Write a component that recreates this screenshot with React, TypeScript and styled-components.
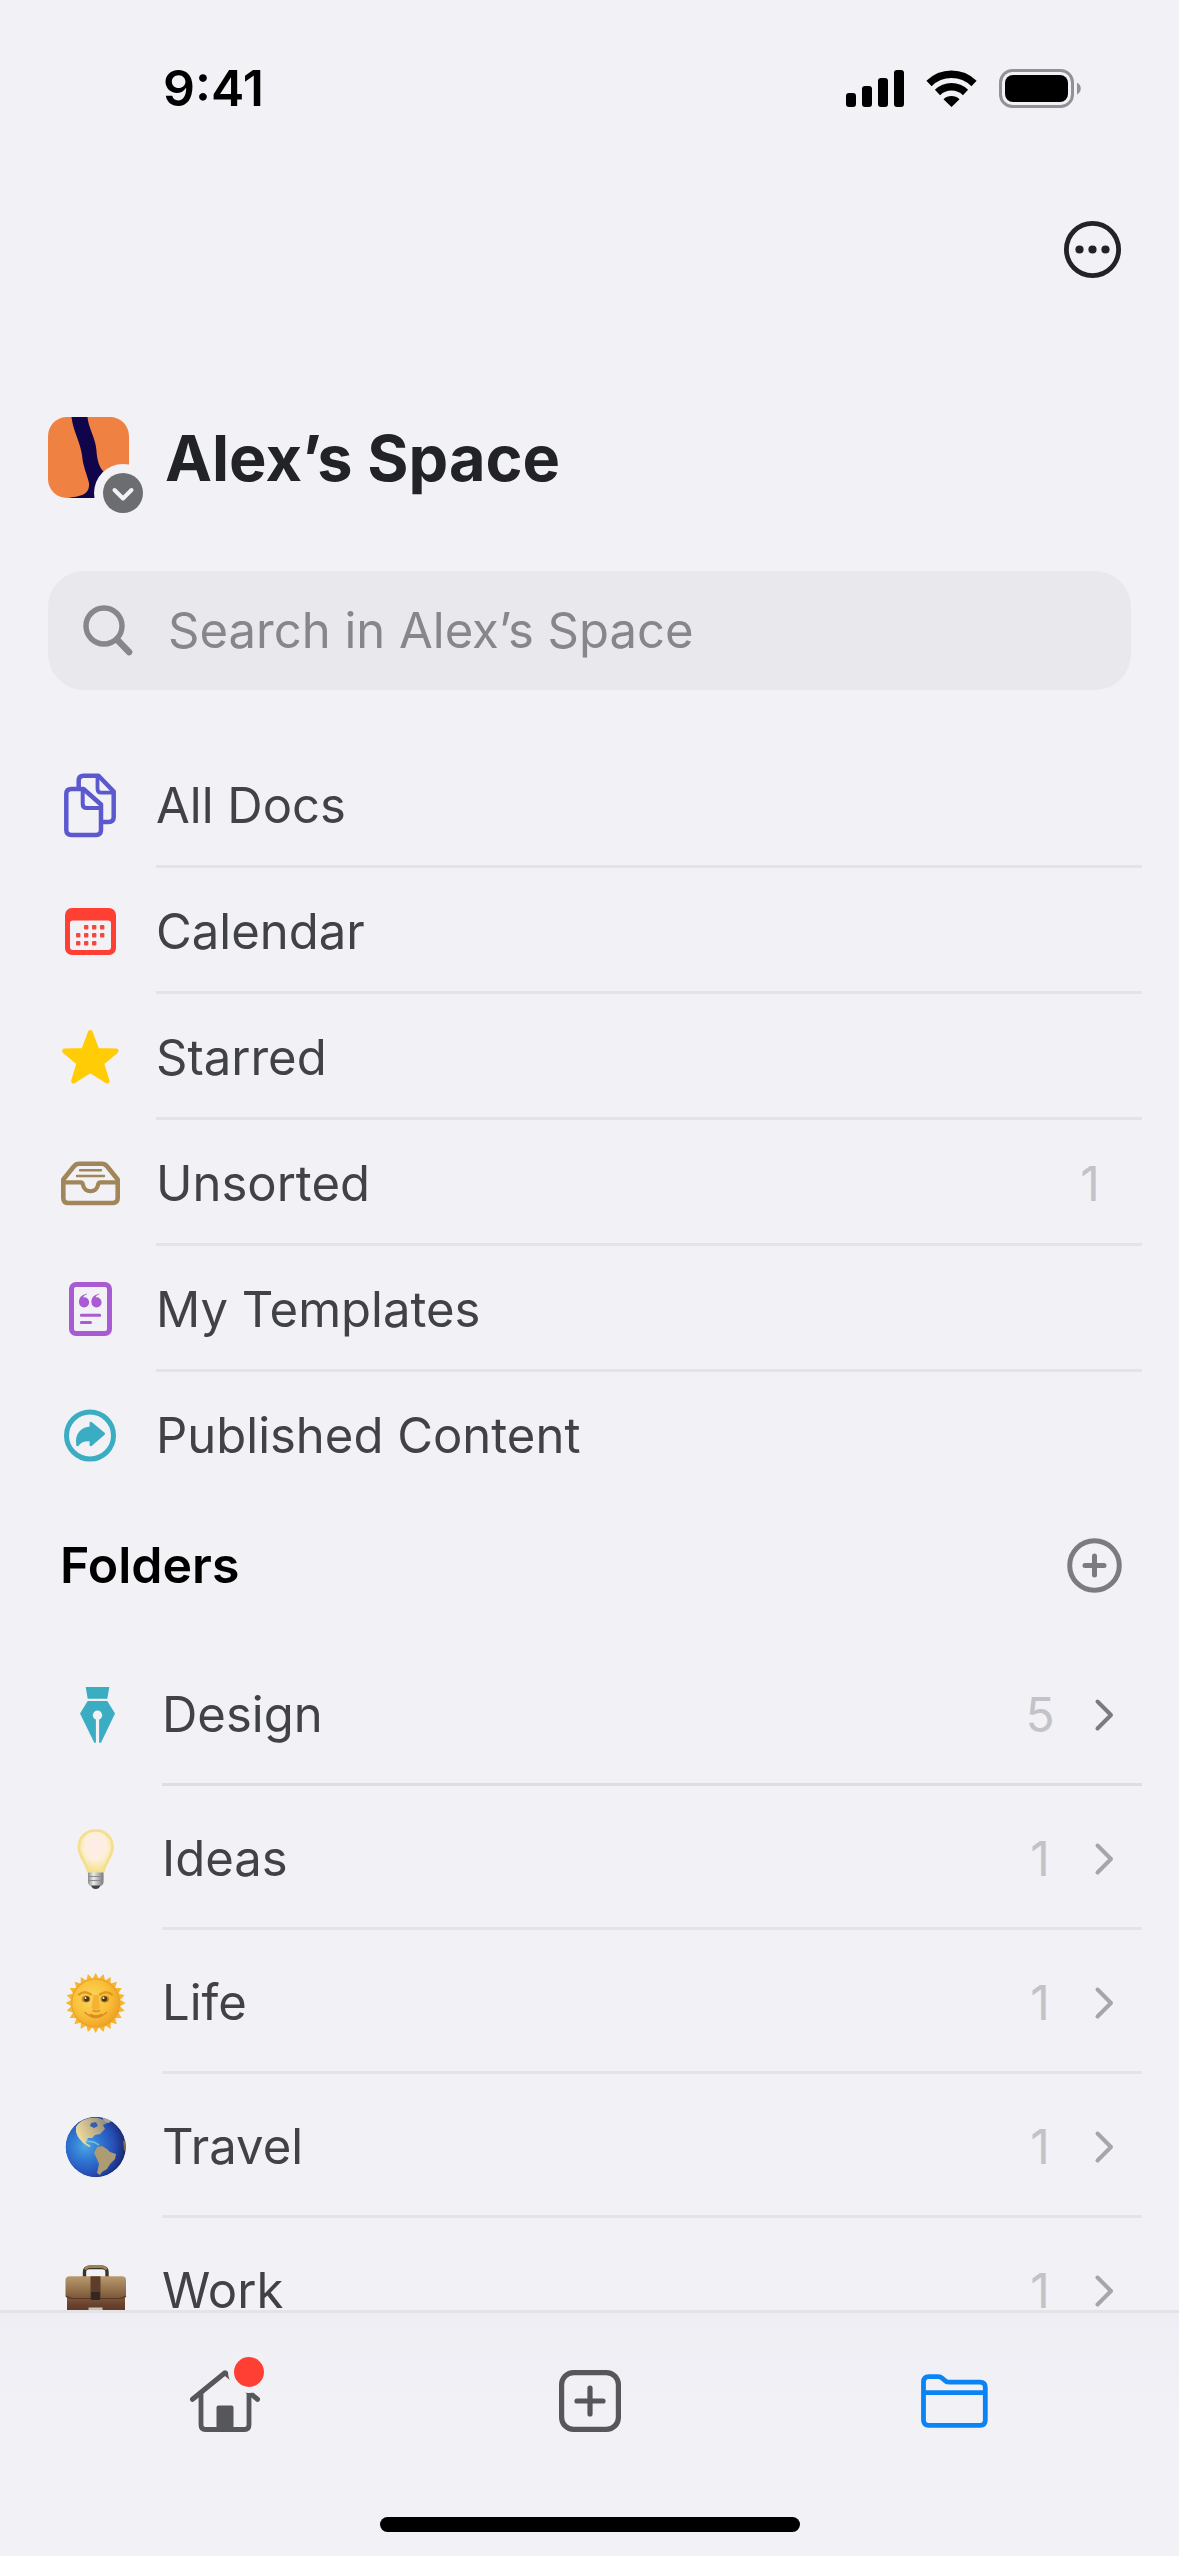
import React from "react";
import styled, { createGlobalStyle } from "styled-components";

const color = {
  page: "#f2f1f6",
  ink: "#222327",
  text: "#414246",
  line: "#e4e3e8",
  lineStrong: "#dedde3",
  muted: "#86878b",
  count: "#c3c2c8",
  grey: "#7b7c80",
  greyLight: "#a5a5aa",
  tab: "#56575b",
  blue: "#0a84f5",
  red: "#ff3f34",
  teal: "#3aadc3",
};

const GlobalStyle = createGlobalStyle`
  *, *::before, *::after { box-sizing: border-box; }
  body {
    margin: 0;
    background: ${color.page};
    color: ${color.text};
    font-family: Inter, Roboto, "Liberation Sans", sans-serif;
    font-size: 49px;
    line-height: 60px;
  }
  button { font: inherit; color: inherit; background: none; border: 0; padding: 0; cursor: pointer; }
  a { color: inherit; text-decoration: none; }
  svg { display: block; flex: none; overflow: visible; }
`;

const Screen = styled.div`
  display: flex;
  flex-direction: column;
  height: 100vh;
  overflow: hidden;
`;

const StatusBar = styled.header`
  display: flex;
  align-items: center;
  justify-content: space-between;
  flex: none;
  height: 176px;
  padding: 0 98px 0 163px;
  color: #000;
  font-size: 50px;
  font-weight: 600;
`;

const StatusIcons = styled.div`
  display: flex;
  align-items: center;
  gap: 22px;
`;

const Toolbar = styled.div`
  display: flex;
  align-items: center;
  justify-content: flex-end;
  flex: none;
  height: 146px;
  padding: 0 58px;
`;

const Content = styled.main`
  flex: 1;
  min-height: 0;
  overflow-y: auto;
  scrollbar-width: none;
`;

const SpaceHeader = styled.div`
  display: flex;
  align-items: center;
  gap: 36px;
  padding: 95px 48px 73px;
`;

const SpaceTitle = styled.h1`
  margin: 0;
  color: ${color.ink};
  font-size: 63px;
  font-weight: 700;
  line-height: 80px;
`;

const SearchBox = styled.label`
  display: flex;
  align-items: center;
  gap: 36px;
  height: 119px;
  margin: 0 48px 52px;
  padding: 0 36px;
  border-radius: 36px;
  background: #e9e8ed;
`;

const SearchInput = styled.input`
  flex: 1;
  min-width: 0;
  height: 60px;
  padding: 0;
  border: 0;
  outline: 0;
  background: none;
  color: ${color.text};
  font: inherit;
  &::placeholder { color: ${color.muted}; opacity: 1; }
`;

const List = styled.ul`
  margin: 0;
  padding: 0;
  list-style: none;
`;

const Row = styled.a<{ $inset: number; $height: number }>`
  display: flex;
  gap: 36px;
  height: ${(p) => p.$height}px;
  padding: 0 37px 0 ${(p) => p.$inset}px;
`;

const RowIcon = styled.span`
  display: flex;
  align-items: center;
  flex: none;
  width: 60px;
  padding-top: 2px;
`;

const RowBody = styled.span<{ $line: string; $end: number }>`
  display: flex;
  align-items: center;
  flex: 1;
  gap: 38px;
  padding: 4px ${(p) => p.$end}px 0 0;
  border-bottom: 3px solid ${(p) => p.$line};
`;

const RowLabel = styled.span`
  flex: 1;
`;

const Count = styled.span`
  min-width: 32px;
  color: ${color.count};
  font-size: 48px;
  text-align: center;
`;

const FoldersHeader = styled.div`
  display: flex;
  align-items: center;
  justify-content: space-between;
  height: 144px;
  padding: 0 57px 10px 60px;
`;

const FoldersTitle = styled.h2`
  margin: 0;
  color: #000;
  font-size: 50px;
  font-weight: 600;
  line-height: 60px;
`;

const BottomBar = styled.footer`
  display: flex;
  flex-direction: column;
  align-items: center;
  flex: none;
  padding-bottom: 24px;
  border-top: 3px solid ${color.line};
  background: linear-gradient(#efeef4, ${color.page} 100px);
`;

const Tabs = styled.nav`
  display: grid;
  grid-template-columns: repeat(3, 1fr);
  width: 100%;
  height: 176px;
  padding: 0 42px;
`;

const Tab = styled.button`
  display: flex;
  align-items: center;
  justify-content: center;
`;

const HomeIndicator = styled.div`
  width: 420px;
  height: 15px;
  margin-top: 28px;
  border-radius: 8px;
  background: #000;
`;

const Signal = () => (
  <svg width="58" height="37" viewBox="0 0 58 37" aria-hidden="true">
    <rect x="0" y="23" width="10" height="14" rx="3" />
    <rect x="16" y="16" width="10" height="21" rx="3" />
    <rect x="32" y="8" width="10" height="29" rx="3" />
    <rect x="48" y="0" width="10" height="37" rx="3" />
  </svg>
);

const Wifi = () => (
  <svg width="51" height="37" viewBox="0 0 51 37" aria-hidden="true">
    <path d="M3 13.5A32 32 0 0 1 48 13.5" fill="none" stroke="#000" strokeWidth="7.4" />
    <path d="M11.5 22.5A20 20 0 0 1 39.5 22.5" fill="none" stroke="#000" strokeWidth="7.4" />
    <path d="M17.5 29.3A11.5 11.5 0 0 1 33.5 29.3L25.5 37Z" />
  </svg>
);

const Battery = () => (
  <svg width="82" height="39" viewBox="0 0 82 39" aria-hidden="true">
    <rect x="1.5" y="1.5" width="72" height="36" rx="12" fill="none" stroke="#929196" strokeWidth="3" />
    <rect x="6" y="6" width="63" height="27" rx="8" />
    <path d="M78 13.5c5 2.5 5 9.5 0 12z" fill="#929196" />
  </svg>
);

const More = () => (
  <svg width="57" height="57" viewBox="0 0 57 57" fill={color.ink} aria-hidden="true">
    <circle cx="28.5" cy="28.5" r="26.1" fill="none" stroke={color.ink} strokeWidth="4.8" />
    <circle cx="15.5" cy="28.5" r="4.1" />
    <circle cx="28.5" cy="28.5" r="4.1" />
    <circle cx="41.5" cy="28.5" r="4.1" />
  </svg>
);

const SpaceAvatar = () => (
  <svg width="81" height="81" viewBox="0 0 81 81" role="img" aria-label="Switch space">
    <defs>
      <clipPath id="avatar"><rect width="81" height="81" rx="19" /></clipPath>
    </defs>
    <g clipPath="url(#avatar)">
      <rect width="81" height="81" fill="#ef8142" />
      <path d="M23.5 0H39.5C40 10 48 22 48.5 34C49 42 51 50 55 54L70 81H20C31 79 42 79 41 66C39 57 35 50 34 38C32 24 25 14 23.5 0Z" fill="#10054b" />
    </g>
    <circle cx="75" cy="76" r="29" fill={color.page} />
    <circle cx="75" cy="76" r="20" fill="#6c6d70" />
    <path d="M66.5 73L75 81.5L83.5 73" fill="none" stroke={color.page} strokeWidth="4" strokeLinecap="round" strokeLinejoin="round" />
  </svg>
);

const SearchIcon = () => (
  <svg width="48" height="50" viewBox="0 0 48 50" fill="none" stroke={color.muted} aria-hidden="true">
    <circle cx="20" cy="20" r="18" strokeWidth="5.4" />
    <path d="M33 33.5L45 46" strokeWidth="6.6" strokeLinecap="round" />
  </svg>
);

const Glyph = ({ children }: { children: React.ReactNode }) => (
  <svg width="60" height="64" viewBox="0 0 60 64" aria-hidden="true">{children}</svg>
);

const DocsIcon = () => (
  <Glyph>
    <g fill="none" stroke="#5c59cf" strokeWidth="4.5" strokeLinejoin="round">
      <path d="M18.7 14V6.7q0-5 5-5H38.5L53.7 17.5V43q0 5-5 5H42" />
      <path d="M37.5 2V15q0 3.7 3.7 3.7H53" strokeWidth="3.8" />
      <path d="M6.3 20q0-5 5-5H23.5L41 30.5V56q0 5-5 5H11.3q-5 0-5-5Z" />
      <path d="M22.7 15V30q0 4 4 4H41" strokeWidth="4" />
    </g>
  </Glyph>
);

const calendarDots = [[26, 27], [34, 27], [42, 27], [18, 35], [26, 35], [34, 35], [42, 35], [18, 43], [26, 43], [34, 43]];

const CalendarIcon = () => (
  <Glyph>
    <rect x="5" y="8" width="51" height="47" rx="7" fill={color.red} />
    <rect x="10" y="20.5" width="41" height="29.5" rx="3" fill={color.page} />
    {calendarDots.map(([x, y]) => (
      <rect key={`${x}-${y}`} x={x - 2} y={y - 2} width="4.4" height="4.4" rx="1" fill="#f0483d" />
    ))}
  </Glyph>
);

const StarIcon = () => (
  <Glyph>
    <path d="M30.3 6.5L37 24.5L56 25L41.5 37L47 55L30.3 44.5L13.6 55L19.1 37L4.6 25L23.6 24.5Z" fill="#ffcc05" stroke="#ffcc05" strokeWidth="5" strokeLinejoin="round" />
  </Glyph>
);

const TrayIcon = () => (
  <Glyph>
    <g fill="none" stroke="#a08658" strokeWidth="4.6" strokeLinejoin="round">
      <path d="M3.3 27.5L14 14.2q2-2.5 5-2.5H42q3 0 5 2.5L57.7 27.5V46q0 5-5 5H8.3q-5 0-5-5Z" />
      <path d="M3.3 30.3H20.5q2 0 2.4 2.2C24 41.5 37 41.5 38.1 32.5q.4-2.2 2.4-2.2H57.7" strokeWidth="4.2" />
      <path d="M20 18.3H41M17 24H44" strokeWidth="2.4" strokeLinecap="round" />
    </g>
  </Glyph>
);

const TemplateIcon = () => (
  <Glyph>
    <rect x="11.5" y="6.5" width="38" height="49" rx="4.5" fill="none" stroke="#a95bd3" strokeWidth="5" />
    <g fill="#a95bd3">
      <path d="M27 15.5C21 17 19 20 19 24.3a5.1 5.1 0 1 0 5.1-5.1h-1C23.7 18 25 17 27 16.3Z" />
      <path d="M39.4 15.5C33.4 17 31.4 20 31.4 24.3a5.1 5.1 0 1 0 5.1-5.1h-1C36.1 18 37.4 17 39.4 16.3Z" />
    </g>
    <path d="M21.3 37.3H39.7M21.3 44.4H30.5" stroke="#a95bd3" strokeWidth="3" strokeLinecap="round" />
  </Glyph>
);

const PublishedIcon = () => (
  <Glyph>
    <circle cx="30" cy="31.5" r="23.5" fill="none" stroke={color.teal} strokeWidth="5" />
    <path d="M30.8 19L43.8 29.7L30.8 41V36.2C24.5 35.5 20.5 37 17.5 41C16 31 21 24.2 30.8 23.7Z" fill={color.teal} stroke={color.teal} strokeWidth="2.5" strokeLinejoin="round" />
  </Glyph>
);

const PenIcon = () => (
  <Glyph>
    <g fill={color.teal}>
      <path d="M19.7 4H43.3L41.3 15.7H21.7Z" />
      <path d="M21.7 18H41.3L49 30.5L35 59.7H28.3L14 30.5Z" />
    </g>
    <circle cx="31.5" cy="32.3" r="4.7" fill={color.page} />
    <path d="M31.5 32V60" stroke={color.page} strokeWidth="3.2" />
  </Glyph>
);

const BulbIcon = () => (
  <Glyph>
    <defs>
      <radialGradient id="glass" cx=".5" cy=".4" r=".6">
        <stop offset="0" stopColor="#fdecea" />
        <stop offset=".5" stopColor="#fdefdf" />
        <stop offset=".78" stopColor="#f8e8a8" />
        <stop offset="1" stopColor="#f5e18c" />
      </radialGradient>
      <linearGradient id="cap">
        <stop offset="0" stopColor="#8d8d8f" />
        <stop offset=".35" stopColor="#ebebec" />
        <stop offset="1" stopColor="#77777a" />
      </linearGradient>
    </defs>
    <path d="M29.7 2.3C19 2.3 11.7 10 11.7 20.3C11.7 30 19 35 21.5 45.5H38C40.5 35 47.7 30 47.7 20.3C47.7 10 40 2.3 29.7 2.3Z" fill="url(#glass)" />
    <path d="M29.7 3.5C19.5 3.5 12.9 10.5 12.9 20.3C12.9 29 19.5 34 22.3 44.5H37.2C39.9 34 46.5 29 46.5 20.3C46.5 10.5 39.5 3.5 29.7 3.5Z" fill="none" stroke="#f4df8e" strokeWidth="2.6" />
    <path d="M22 45.5H37.5V55q0 3-4 4.5H26q-4-1.5-4-4.5Z" fill="url(#cap)" />
    <path d="M22 49.5H37.5M22.5 53.5H37" stroke="#8c8c90" strokeWidth="1" />
    <path d="M25 58.5H34.5Q33 62 29.7 62T25 58.5Z" fill="#434347" />
  </Glyph>
);

const SUN_POINTS = 24;
const sunRays = Array.from({ length: SUN_POINTS * 2 }, (_, i) => {
  const angle = (i * Math.PI) / SUN_POINTS - Math.PI / 2;
  const r = i % 2 ? 24.5 : 30;
  return `${(29.7 + r * Math.cos(angle)).toFixed(1)},${(32 + r * Math.sin(angle)).toFixed(1)}`;
}).join(" ");

const SunIcon = () => (
  <Glyph>
    <defs>
      <radialGradient id="sun" cx=".4" cy=".4" r=".65">
        <stop offset="0" stopColor="#fdd75d" />
        <stop offset=".6" stopColor="#f9bf38" />
        <stop offset="1" stopColor="#ec9f24" />
      </radialGradient>
    </defs>
    <polygon points={sunRays} fill="#f6b62f" />
    <circle cx="29.7" cy="32" r="24" fill="url(#sun)" stroke="#eda225" strokeWidth="1.2" />
    <path d="M13 23.5q6-4.5 12 0M34 23.5q6-4.5 12 0" fill="none" stroke="#e39720" strokeWidth="2.4" strokeLinecap="round" />
    <path d="M27 24L25.5 37q4 4 8.5 0L32.5 24" fill="#f5b335" />
    <ellipse cx="20" cy="28" rx="4.5" ry="3.5" fill="#d98f20" />
    <ellipse cx="38.8" cy="28" rx="4.5" ry="3.5" fill="#d98f20" />
    <circle cx="20.5" cy="28" r="2.8" fill="#4b3a20" />
    <circle cx="38.5" cy="28" r="2.8" fill="#4b3a20" />
    <circle cx="19.5" cy="27" r="1" fill="#fff4d2" />
    <circle cx="37.5" cy="27" r="1" fill="#fff4d2" />
    <path d="M27 39.5q3.3 2 6.5 0M19 41.5q10.7 10 21.5 0M24.5 43.5q5.7 3 11 0" fill="none" stroke="#dc8b26" strokeWidth="1.5" strokeLinecap="round" />
  </Glyph>
);

const EarthIcon = () => (
  <Glyph>
    <defs>
      <radialGradient id="sea" cx=".33" cy=".48" r=".68">
        <stop offset="0" stopColor="#4da6e4" />
        <stop offset=".35" stopColor="#3078d4" />
        <stop offset=".7" stopColor="#264fb5" />
        <stop offset="1" stopColor="#17256c" />
      </radialGradient>
      <linearGradient id="north" x1="0" y1=".6" x2="1" y2=".2">
        <stop offset="0" stopColor="#f2dfa0" />
        <stop offset=".45" stopColor="#c9b78b" />
        <stop offset="1" stopColor="#85857f" />
      </linearGradient>
      <clipPath id="globe"><circle cx="29.7" cy="32" r="30.2" /></clipPath>
    </defs>
    <g clipPath="url(#globe)">
      <circle cx="29.7" cy="32" r="30.2" fill="url(#sea)" />
      <path d="M10 12C14 5 23 2 32 3L44 7L37 10L39 14L34 19L29 20L26 23L22 23L20 28L25 31L23 32L17 28L12 22L10 17Z" fill="url(#north)" />
      <path d="M25 8L30 7L32 11L28 13L24 11Z" fill="#345fb0" />
      <path d="M36 2L46 5L43 8L38 6Z" fill="#a4a49b" />
      <path d="M31 32L36 31L41 34L44 37L50 39L49 44L44 49L41 54L36 57L34 60L31 58L33 49L30 42L28 38Z" fill="#ad9b74" />
      <path d="M57 26L62 24V39L58 35Z" fill="#80694c" />
      <path d="M20 26L28 27L33 30" fill="none" stroke="#72bdd3" strokeWidth="1.8" />
    </g>
  </Glyph>
);

const BriefcaseIcon = () => (
  <Glyph>
    <defs>
      <linearGradient id="leather" x1="0" y1="0" x2="0" y2="1">
        <stop offset="0" stopColor="#b79a6d" />
        <stop offset=".35" stopColor="#8f6d49" />
        <stop offset=".65" stopColor="#6b432e" />
        <stop offset="1" stopColor="#4f2c20" />
      </linearGradient>
    </defs>
    <path d="M18.5 18V13q0-4.5 5-4.5H36q5 0 5 4.5V18" fill="none" stroke="#3a322b" strokeWidth="3.4" />
    <path d="M19 10.5q2-3 5-3H35.5q3 0 5 3" fill="none" stroke="#9d8259" strokeWidth="3" />
    <path d="M4 17.3H56q4 0 4 4V37L59 39V56q0 4-4 4H5q-4 0-4-4V39L-.5 37V21.3q0-4 4.5-4Z" fill="url(#leather)" />
    <path d="M0 37Q3 39.5 7 39.5H53Q57 39.5 60 37" fill="none" stroke="#543726" strokeWidth="1.2" />
    <path d="M24.5 17.3H34.5V41H24.5Z" fill="#5c3d29" />
    <rect x="25" y="33" width="9" height="8" rx="1" fill="#302822" />
    <rect x="22.5" y="48.5" width="14" height="4" fill="#c9c3bd" />
  </Glyph>
);

const Chevron = ({ tone }: { tone: string }) => (
  <svg width="20" height="34" viewBox="0 0 20 34" fill="none" stroke={tone} strokeWidth="4" strokeLinecap="round" strokeLinejoin="round" aria-hidden="true">
    <path d="M3.5 3.5L17 17L3.5 30.5" />
  </svg>
);

const AddCircle = () => (
  <svg width="55" height="55" viewBox="0 0 55 55" fill="none" stroke={color.grey} strokeWidth="5" aria-hidden="true">
    <circle cx="27.5" cy="27.5" r="24.8" />
    <path d="M27.5 18V37M18 27.5H37" strokeLinecap="round" />
  </svg>
);

const HomeIcon = () => (
  <svg width="70" height="66" viewBox="0 0 70 66" fill="none" stroke={color.tab} strokeLinecap="round" strokeLinejoin="round" aria-hidden="true">
    <path d="M2.5 31.3L35 4.8L67.5 31.3" strokeWidth="5" />
    <path d="M11 25V57q0 4.5 4.5 4.5H54.5q4.5 0 4.5-4.5V25" strokeWidth="4.8" />
    <rect x="26.5" y="37.5" width="17" height="25" rx="2" fill={color.tab} stroke="none" />
    <circle cx="59" cy="4" r="21" fill="#f1f0f5" stroke="none" />
    <circle cx="59" cy="4" r="15" fill={color.red} stroke="none" />
  </svg>
);

const AddSquare = () => (
  <svg width="62" height="62" viewBox="0 0 62 62" fill="none" stroke={color.tab} strokeWidth="5.2" aria-hidden="true">
    <rect x="2.6" y="2.6" width="56.8" height="56.8" rx="12" />
    <path d="M31 18V44M18 31H44" strokeLinecap="round" />
  </svg>
);

const FolderIcon = () => (
  <svg width="67" height="54" viewBox="0 0 67 54" fill="none" stroke={color.blue} strokeWidth="4.8" strokeLinejoin="round" aria-hidden="true">
    <path d="M2.5 8q0-5.3 5.3-5.3H17q2.5 0 4.3 1.6l2.2 2q1.9 1.9 4.5 1.9H59q5.3 0 5.3 5.3V46q0 5.3-5.3 5.3H7.8q-5.3 0-5.3-5.3Z" />
    <path d="M2.5 18.7H64.3" />
  </svg>
);

type Entry = { label: string; icon: React.ComponentType; count?: number };

const sections: Entry[] = [
  { label: "All Docs", icon: DocsIcon },
  { label: "Calendar", icon: CalendarIcon },
  { label: "Starred", icon: StarIcon },
  { label: "Unsorted", icon: TrayIcon, count: 1 },
  { label: "My Templates", icon: TemplateIcon },
  { label: "Published Content", icon: PublishedIcon },
];

const folders: Entry[] = [
  { label: "Design", icon: PenIcon, count: 5 },
  { label: "Ideas", icon: BulbIcon, count: 1 },
  { label: "Life", icon: SunIcon, count: 1 },
  { label: "Travel", icon: EarthIcon, count: 1 },
  { label: "Work", icon: BriefcaseIcon, count: 1 },
];

export default function App() {
  return (
    <>
      <GlobalStyle />
      <Screen>
        <StatusBar>
          <time>9:41</time>
          <StatusIcons>
            <Signal />
            <Wifi />
            <Battery />
          </StatusIcons>
        </StatusBar>
        <Toolbar>
          <button type="button" aria-label="More options"><More /></button>
        </Toolbar>
        <Content>
          <SpaceHeader>
            <button type="button"><SpaceAvatar /></button>
            <SpaceTitle>Alex’s Space</SpaceTitle>
          </SpaceHeader>
          <SearchBox>
            <SearchIcon />
            <SearchInput type="text" placeholder="Search in Alex’s Space" aria-label="Search in Alex’s Space" />
          </SearchBox>
          <List>
            {sections.map(({ label, icon: Icon, count }, i) => (
              <li key={label}>
                <Row href="#" $inset={60} $height={126}>
                  <RowIcon><Icon /></RowIcon>
                  <RowBody $end={36} $line={i === sections.length - 1 ? "transparent" : color.line}>
                    <RowLabel>{label}</RowLabel>
                    {count !== undefined && <Count>{count}</Count>}
                  </RowBody>
                </Row>
              </li>
            ))}
          </List>
          <FoldersHeader>
            <FoldersTitle>Folders</FoldersTitle>
            <button type="button" aria-label="Add folder"><AddCircle /></button>
          </FoldersHeader>
          <List>
            {folders.map(({ label, icon: Icon, count }, i) => (
              <li key={label}>
                <Row href="#" $inset={66} $height={144}>
                  <RowIcon><Icon /></RowIcon>
                  <RowBody $end={28} $line={i === 0 ? color.lineStrong : color.line}>
                    <RowLabel>{label}</RowLabel>
                    <Count>{count}</Count>
                    <Chevron tone={i === 0 ? color.grey : color.greyLight} />
                  </RowBody>
                </Row>
              </li>
            ))}
          </List>
        </Content>
        <BottomBar>
          <Tabs>
            <Tab type="button" aria-label="Home"><HomeIcon /></Tab>
            <Tab type="button" aria-label="New document"><AddSquare /></Tab>
            <Tab type="button" aria-label="Folders"><FolderIcon /></Tab>
          </Tabs>
          <HomeIndicator />
        </BottomBar>
      </Screen>
    </>
  );
}
